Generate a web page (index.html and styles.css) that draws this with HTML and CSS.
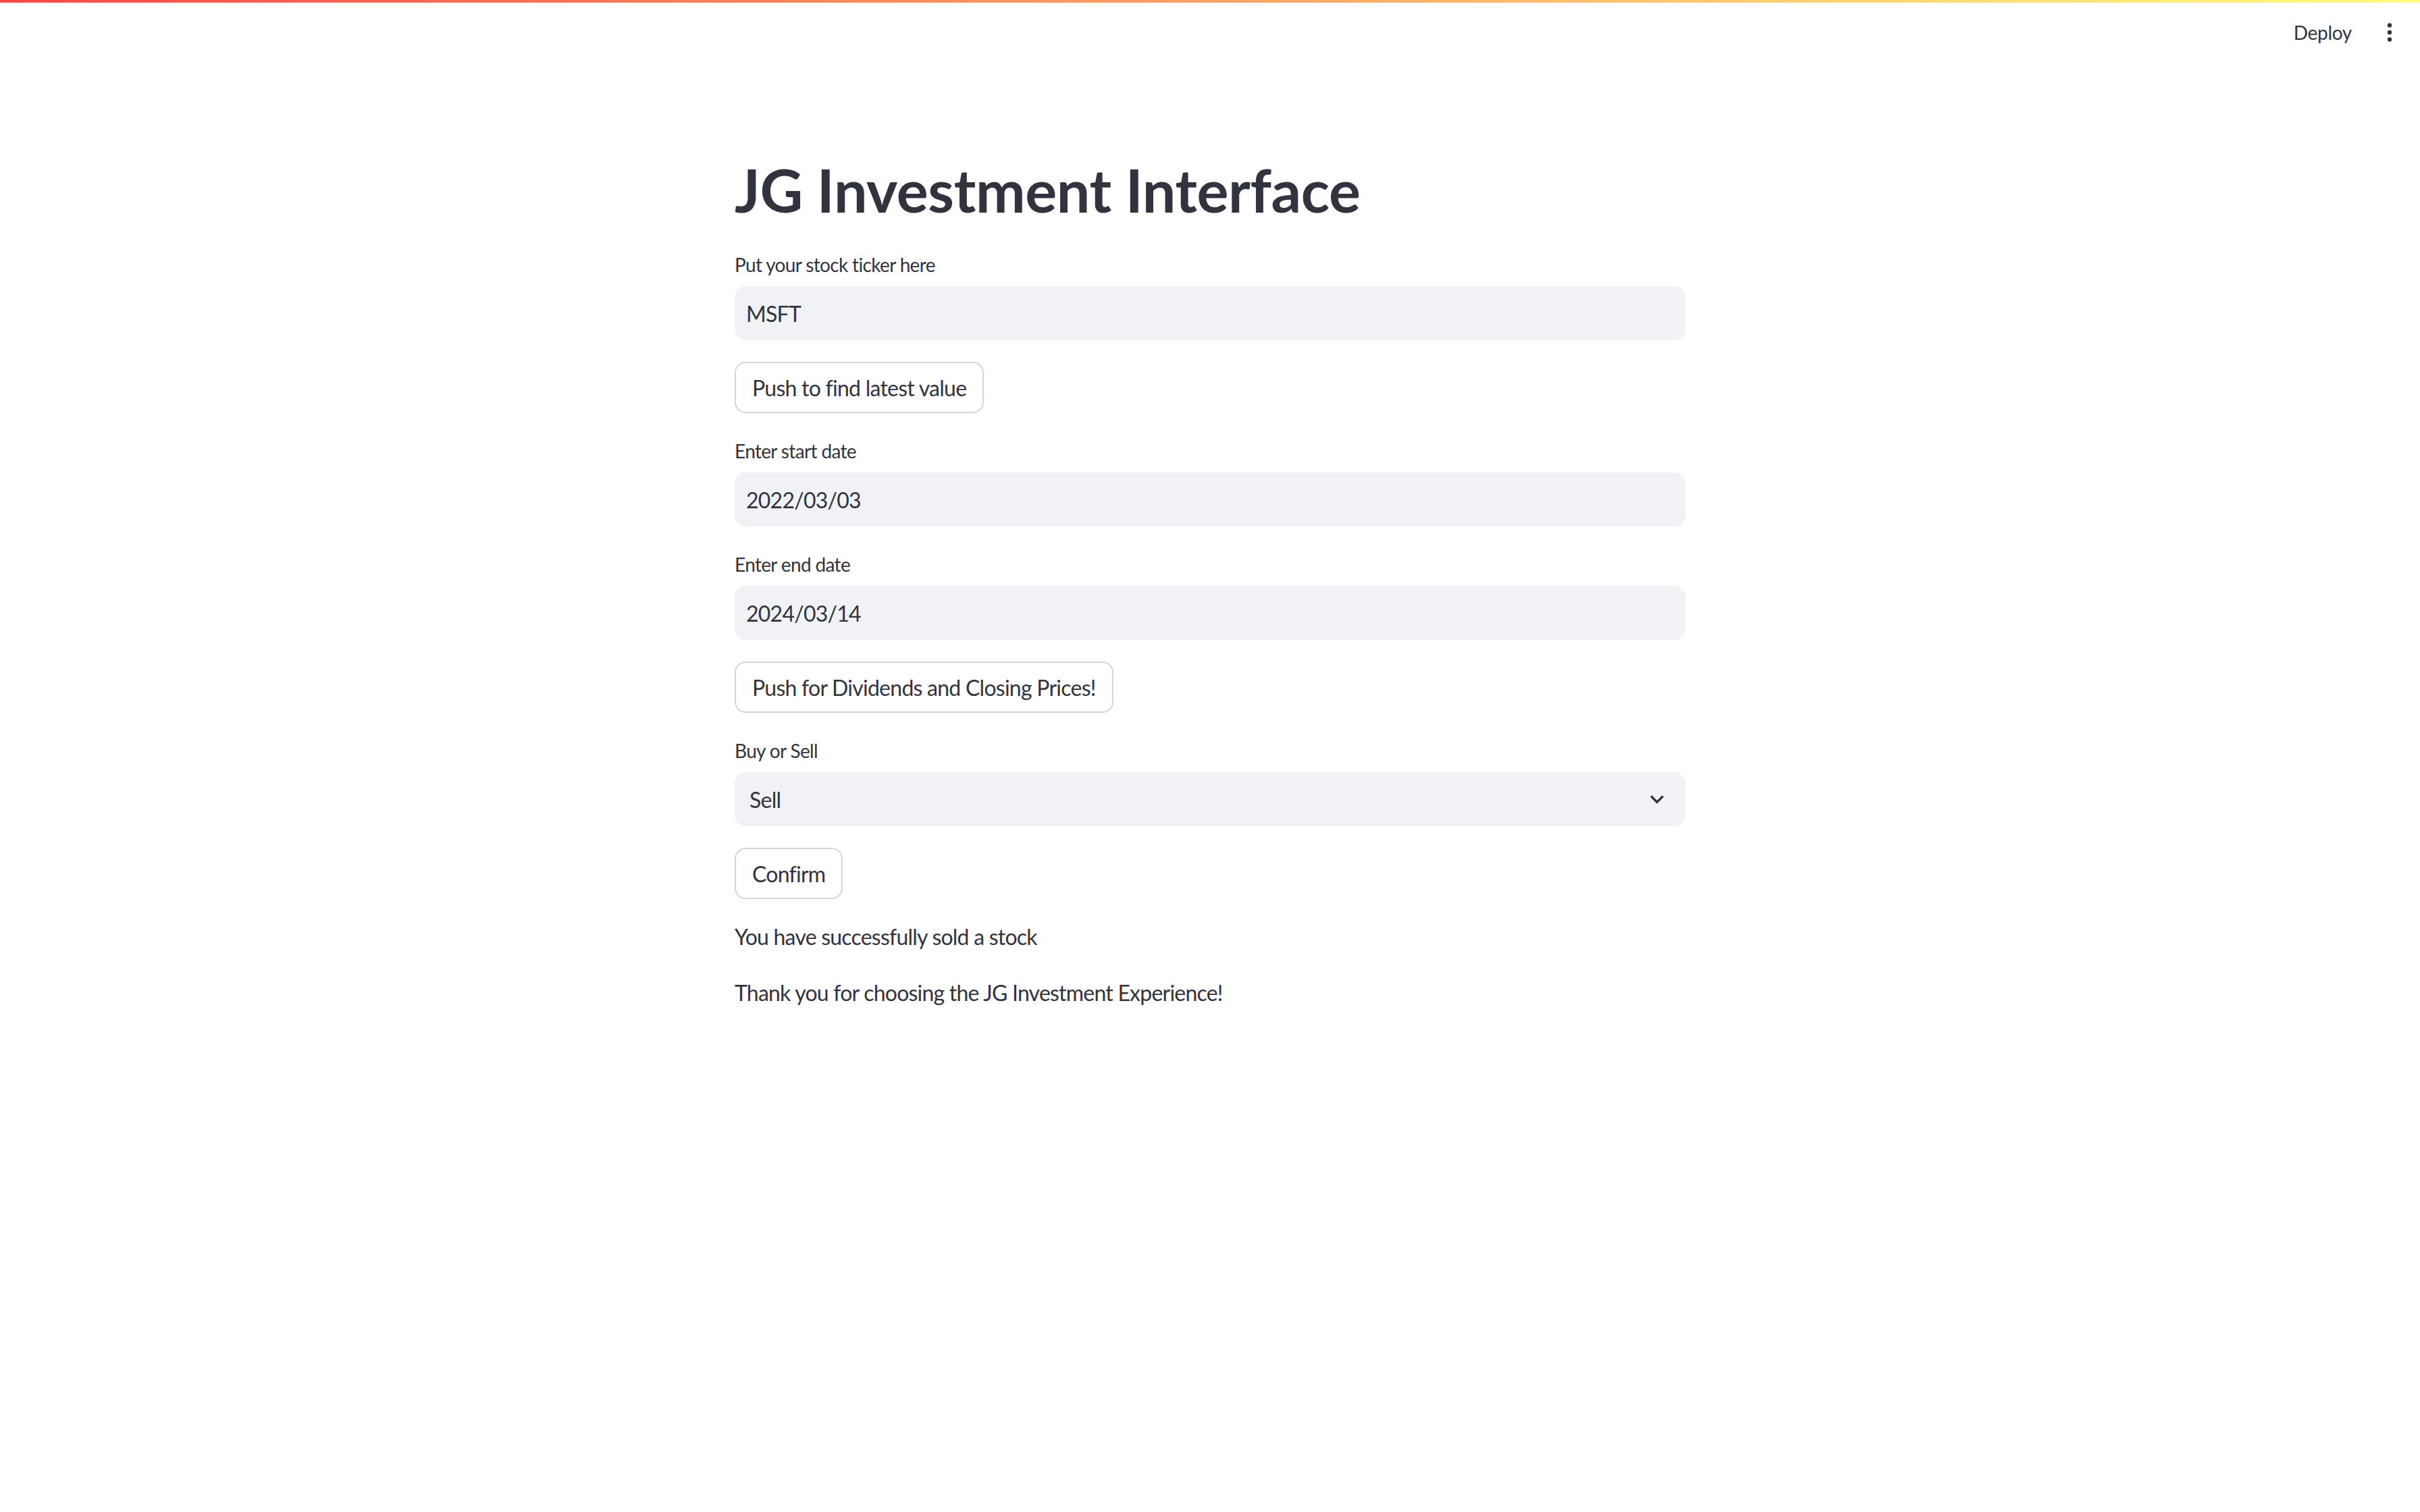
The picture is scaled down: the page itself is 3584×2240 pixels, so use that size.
FILE: index.html
```html
<!DOCTYPE html>
<html lang="en">
<head>
<meta charset="utf-8">
<title>JG Investment Interface</title>
<link rel="stylesheet" href="styles.css">
</head>
<body>
<div class="decoration"></div>
<header class="toolbar">
  <span class="deploy">Deploy</span>
  <svg class="menu" width="8" height="30" viewBox="0 0 8 30" aria-hidden="true">
    <circle cx="4" cy="4.5" r="3.2"/>
    <circle cx="4" cy="15" r="3.2"/>
    <circle cx="4" cy="25.5" r="3.2"/>
  </svg>
</header>
<main class="main">
  <div class="block">
    <h1 class="title">JG Investment Interface</h1>

    <div class="widget">
      <div class="wlabel">Put your stock ticker here</div>
      <div class="field">MSFT</div>
    </div>

    <div class="btnrow"><button class="btn">Push to find latest value</button></div>

    <div class="widget">
      <div class="wlabel">Enter start date</div>
      <div class="field">2022/03/03</div>
    </div>

    <div class="widget">
      <div class="wlabel">Enter end date</div>
      <div class="field">2024/03/14</div>
    </div>

    <div class="btnrow"><button class="btn">Push for Dividends and Closing Prices!</button></div>

    <div class="widget">
      <div class="wlabel">Buy or Sell</div>
      <div class="field select">
        <span class="select-value">Sell</span>
        <svg class="chev" width="40" height="40" viewBox="0 0 24 24" aria-hidden="true"><path d="M16.59 8.59L12 13.17 7.41 8.59 6 10l6 6 6-6z"/></svg>
      </div>
    </div>

    <div class="btnrow"><button class="btn">Confirm</button></div>

    <p class="text">You have successfully sold a stock</p>
    <p class="text">Thank you for choosing the JG Investment Experience!</p>
  </div>
</main>
</body>
</html>
```

FILE: styles.css
```css
html, body {
  margin: 0;
  padding: 0;
  background: #ffffff;
}
body {
  font-family: Lato, "Noto Sans", "Liberation Sans", sans-serif;
  color: #31333f;
}
.decoration {
  height: 4px;
  background: linear-gradient(90deg, rgb(255, 75, 75), rgb(255, 253, 128));
}
.toolbar {
  height: 88px;
  display: flex;
  justify-content: flex-end;
  align-items: center;
  padding-right: 41px;
  gap: 52px;
}
.deploy {
  font-size: 28px;
  color: #31333f;
  line-height: 1;
  letter-spacing: -0.3px;
}
.menu {
  fill: #31333f;
  display: block;
}
.main {
  display: flex;
  justify-content: center;
  padding-top: 100px;
}
.block {
  width: 1408px;
  display: flex;
  flex-direction: column;
  gap: 32px;
}
.title {
  margin: 0;
  padding-top: 38px;
  height: 106px;
  line-height: 102px;
  font-size: 88px;
  font-weight: 700;
  color: #31333f;
  letter-spacing: -0.4px;
}
.widget {
  display: flex;
  flex-direction: column;
}
.wlabel {
  height: 48px;
  line-height: 48px;
  margin-bottom: 8px;
  font-size: 28px;
  letter-spacing: -0.65px;
}
.field {
  height: 80px;
  box-sizing: border-box;
  background: #f0f2f6;
  border-radius: 16px;
  padding-left: 17px;
  display: flex;
  align-items: center;
  font-size: 32px;
  letter-spacing: -0.75px;
}
.select {
  justify-content: space-between;
  padding-left: 22px;
  padding-right: 22px;
}
.chev {
  fill: #31333f;
  display: block;
}
.btnrow {
  display: flex;
}
.btn {
  height: 76px;
  padding: 0 24px;
  border: 2px solid rgba(49, 51, 63, 0.2);
  border-radius: 16px;
  background: #ffffff;
  font-family: inherit;
  font-size: 32px;
  letter-spacing: -0.75px;
  color: #31333f;
}
.text {
  margin: 0;
  height: 51px;
  line-height: 47px;
  font-size: 32px;
  letter-spacing: -0.78px;
}
```
